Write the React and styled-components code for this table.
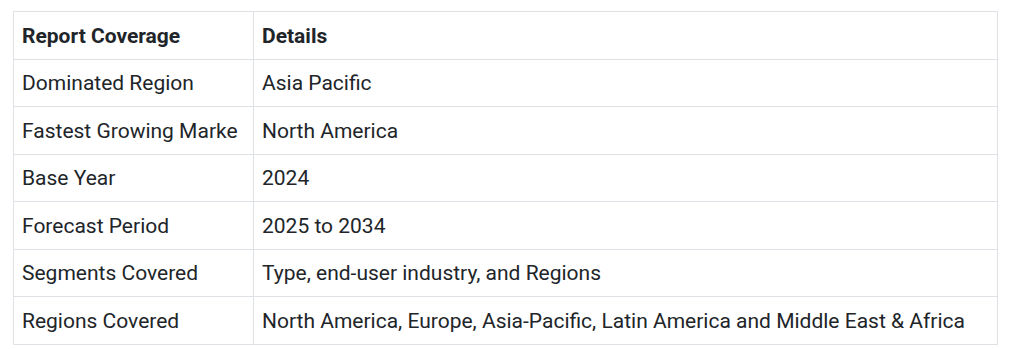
import React from "react";
import styled, { createGlobalStyle } from "styled-components";

const Global = createGlobalStyle`
  html, body { margin: 0; padding: 0; background: #fff; }
  body { font-family: Roboto, "Noto Sans", sans-serif; color: #212529; }
`;

const Page = styled.div`
  padding: 11px 16px 0 13px;
`;

const Table = styled.table`
  width: 985px;
  border-collapse: collapse;
  table-layout: fixed;
  font-size: 21px;
`;

const Row = styled.tr`
  height: 47.5px;
`;

const Cell = styled.td`
  border: 1px solid #dee2e6;
  padding: 1px 8px 0;
  white-space: nowrap;
  overflow: hidden;
  font-weight: ${(p) => (p.$head ? 700 : 400)};
  vertical-align: middle;
`;

const rows = [
  ["Report Coverage", "Details"],
  ["Dominated Region", "Asia Pacific"],
  ["Fastest Growing Marke", "North America"],
  ["Base Year", "2024"],
  ["Forecast Period", "2025 to 2034"],
  ["Segments Covered", "Type, end-user industry, and Regions"],
  ["Regions Covered", "North America, Europe, Asia-Pacific, Latin America and Middle East & Africa"],
];

export default function App() {
  return (
    <>
      <Global />
      <Page>
        <Table>
          <colgroup>
            <col style={{ width: 240 }} />
            <col />
          </colgroup>
          <tbody>
            {rows.map(([a, b], i) => (
              <Row key={i}>
                <Cell $head={i === 0}>{a}</Cell>
                <Cell $head={i === 0}>{b}</Cell>
              </Row>
            ))}
          </tbody>
        </Table>
      </Page>
    </>
  );
}
